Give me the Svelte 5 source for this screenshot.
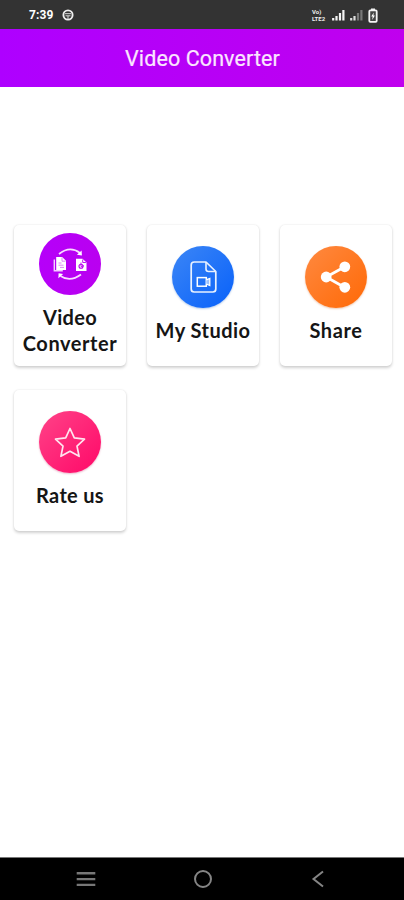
<script>
  const cards = [
    { id: 'convert', lines: ['Video', 'Converter'], spacing: [0.3, 0.55] },
    { id: 'studio', lines: ['My Studio'], spacing: [0.45] },
    { id: 'share', lines: ['Share'], spacing: [0.6] },
    { id: 'rate', lines: ['Rate us'], spacing: [0.3] }
  ];
</script>

<div class="screen">
  <div class="status">
    <span class="time">7:39</span>
    <svg class="globe" width="12" height="12" viewBox="0 0 12 12">
      <circle cx="6" cy="6" r="4.6" fill="none" stroke="#eee" stroke-width="1.9" />
      <path d="M3 4.7h6M3.5 6.8h5M6 7v3" stroke="#ddd" stroke-width="1" />
    </svg>
    <span class="volte"><span>Vo)</span><span>LTE2</span></span>
    <svg class="signal" width="13" height="12" viewBox="0 0 13 12">
      <path d="M1.2 9v2.5M4.5 7v4.5M8 4v7.5M11.4 1v10.5" stroke="#f4f4f4" stroke-width="2.2" />
    </svg>
    <svg class="signal weak" width="13" height="12" viewBox="0 0 13 12">
      <path d="M1.2 9v2.5M4.5 7v4.5" stroke="#ddd" stroke-width="2.2" />
      <path d="M8 4v7.5M11.4 1v10.5" stroke="#777" stroke-width="2.2" />
    </svg>
    <svg class="battery" width="10" height="15" viewBox="0 0 10 15">
      <path d="M3 .5h4v2H3z" fill="#f4f4f4" />
      <rect x="1.3" y="2.4" width="7.4" height="11.4" rx="1" fill="#444" stroke="#f4f4f4" stroke-width="1.8" />
      <path d="M5.8 4.4 3.2 8.5h1.5L4.2 12l2.7-4.4H5.4z" fill="#fff" />
    </svg>
  </div>

  <header><h1>Video Converter</h1></header>

  <main>
    {#each cards as card}
      <button class="card">
        <span class="disc {card.id}">
          <svg width="62" height="62" viewBox="0 0 62 62" fill="none">
            {#if card.id === 'convert'}
              <path d="M20 21Q31 12.5 41 20" stroke="#f7ddff" stroke-width="1.7" />
              <path d="m42.6 17.5.3 5-5-.8z" fill="#fff" />
              <path d="M42 41.5Q31 49.5 21.5 43" stroke="#f7ddff" stroke-width="1.7" />
              <path d="m19.4 45.2.2-5 4.5.8z" fill="#fff" />
              <path d="M15.3 26.5v11.2h8.5" stroke="#f3d0ff" stroke-width="1.4" />
              <path d="M17.2 24h6l3.8 3.7v9.2h-9.8z" fill="#fff" />
              <path d="M23 24.5v3.7h3.5M19.5 30h3M19.5 32.2h5M21 34.4h4" stroke="#d46cf4" stroke-width=".8" />
              <path d="M37 25.8h6.5l4 3.7V38H37z" fill="#fff" />
              <circle cx="42" cy="33.2" r="2" stroke="#b900ef" stroke-width="1.1" />
              <path d="M42 29.5v4l3-.7M43.7 26.5v3h3.2" stroke="#b900ef" stroke-width=".9" />
            {:else if card.id === 'studio'}
              <path d="M34 16H22.2q-3 0-3 3v24q0 3 3 3h18.6q3 0 3-3V25.5z" stroke="#e8f1ff" stroke-width="1.7" stroke-linejoin="round" />
              <path d="M34 16v7q0 2.5 2.5 2.5h7.3" stroke="#e8f1ff" stroke-width="1.6" />
              <rect x="25.3" y="31.6" width="9" height="8.6" stroke="#fff" stroke-width="1.5" />
              <path d="M34.3 33.8 37.8 32.4v7.2L34.3 38" fill="#9cc2ff" stroke="#fff" stroke-width="1.3" />
            {:else if card.id === 'share'}
              <path d="M39.8 20.8 21.2 31 39.8 41.5" stroke="#fff" stroke-width="2.8" />
              <circle cx="39.8" cy="20.8" r="5.4" fill="#fff" />
              <circle cx="21.2" cy="31" r="5.4" fill="#fff" />
              <circle cx="39.8" cy="41.3" r="5.4" fill="#fff" />
            {:else}
              <path d="m31 17.5 4.3 9.4 10.2 1.2-7.5 7 2.1 10.2L31 40.3l-9.1 5L24 35.1l-7.5-7 10.2-1.2z" stroke="#ffe5ef" stroke-width="1.7" stroke-linejoin="round" />
            {/if}
          </svg>
        </span>
        <span class="label">
          {#each card.lines as line, i}
            <span style="letter-spacing: {card.spacing[i]}px">{line}</span>
          {/each}
        </span>
      </button>
    {/each}
  </main>

  <nav>
    <svg width="20" height="18" viewBox="0 0 20 18"><path d="M.7 3.3h18.6M.7 9.1h18.6M.7 14.9h18.6" stroke="#777" stroke-width="2.4" /></svg>
    <svg width="20" height="20" viewBox="0 0 20 20"><circle cx="10" cy="10" r="8" fill="none" stroke="#858585" stroke-width="2" /></svg>
    <svg width="14" height="18" viewBox="0 0 14 18"><path d="M12 1.5 2.5 9l9.5 7.5" fill="none" stroke="#858585" stroke-width="2" /></svg>
  </nav>
</div>

<style>
  :global(body) { margin: 0; background: #fff; }
  .screen { width: 404px; height: 900px; display: flex; flex-direction: column; background: #fff; overflow: hidden; }
  .status { box-sizing: border-box; height: 29px; flex: none; display: flex; align-items: center; padding: 1px 26px 0 29px; background: #333; color: #fff; }
  .time { font: 700 12px/14px Roboto, sans-serif; letter-spacing: 0.1px; width: 33px; }
  .volte { margin-left: auto; display: flex; flex-direction: column; font: 700 6px/7px Roboto, sans-serif; width: 15px; color: #eee; }
  .signal { margin-left: 5px; }
  .battery { margin-left: 5px; }
  header { height: 58px; flex: none; display: flex; align-items: center; justify-content: center; background: linear-gradient(90deg, #ae00ff, #c000ee); }
  h1 { margin: 0; font: 400 21.5px/28px Roboto, sans-serif; letter-spacing: 0.1px; color: #fbe6ff; -webkit-text-stroke: 0.2px #fbe6ff; padding: 2px 0 0 1px; }
  main { flex: 1; display: grid; grid-template-columns: repeat(3, 112px); grid-auto-rows: 141px; gap: 24px 21px; padding: 138px 0 0 14px; align-content: start; }
  .card { box-sizing: border-box; border: 0; padding: 0 0 2px; display: flex; flex-direction: column; align-items: center; justify-content: center; background: #fff; border-radius: 5px; box-shadow: 0 1.5px 3px rgba(0, 0, 0, 0.18), 0 0 2px rgba(0, 0, 0, 0.05); }
  .disc { width: 62px; height: 62px; border-radius: 50%; display: flex; flex: none; }
  .convert { background: linear-gradient(100deg, #b500fa, #ba00ef); }
  .studio { background: linear-gradient(135deg, #3c86f6, #0861fa); box-shadow: 0 1px 2px #b9cce8; }
  .share { background: linear-gradient(135deg, #ff8940, #ff6906); box-shadow: 0 1px 2px #ecc9b4; }
  .rate { background: linear-gradient(135deg, #ff4388, #ff0868); box-shadow: 0 1px 2px #e9b9cb; }
  .label { display: flex; flex-direction: column; align-items: center; margin-top: 9px; font: 700 20px/26px Lato, sans-serif; color: #151515; white-space: nowrap; }
  nav { box-sizing: border-box; height: 43px; flex: none; display: flex; align-items: center; justify-content: space-between; padding: 0 79px 0 76px; background: #000; border-top: 1px solid #777; }
  nav svg:nth-child(2) { margin-right: 2px; }
</style>
